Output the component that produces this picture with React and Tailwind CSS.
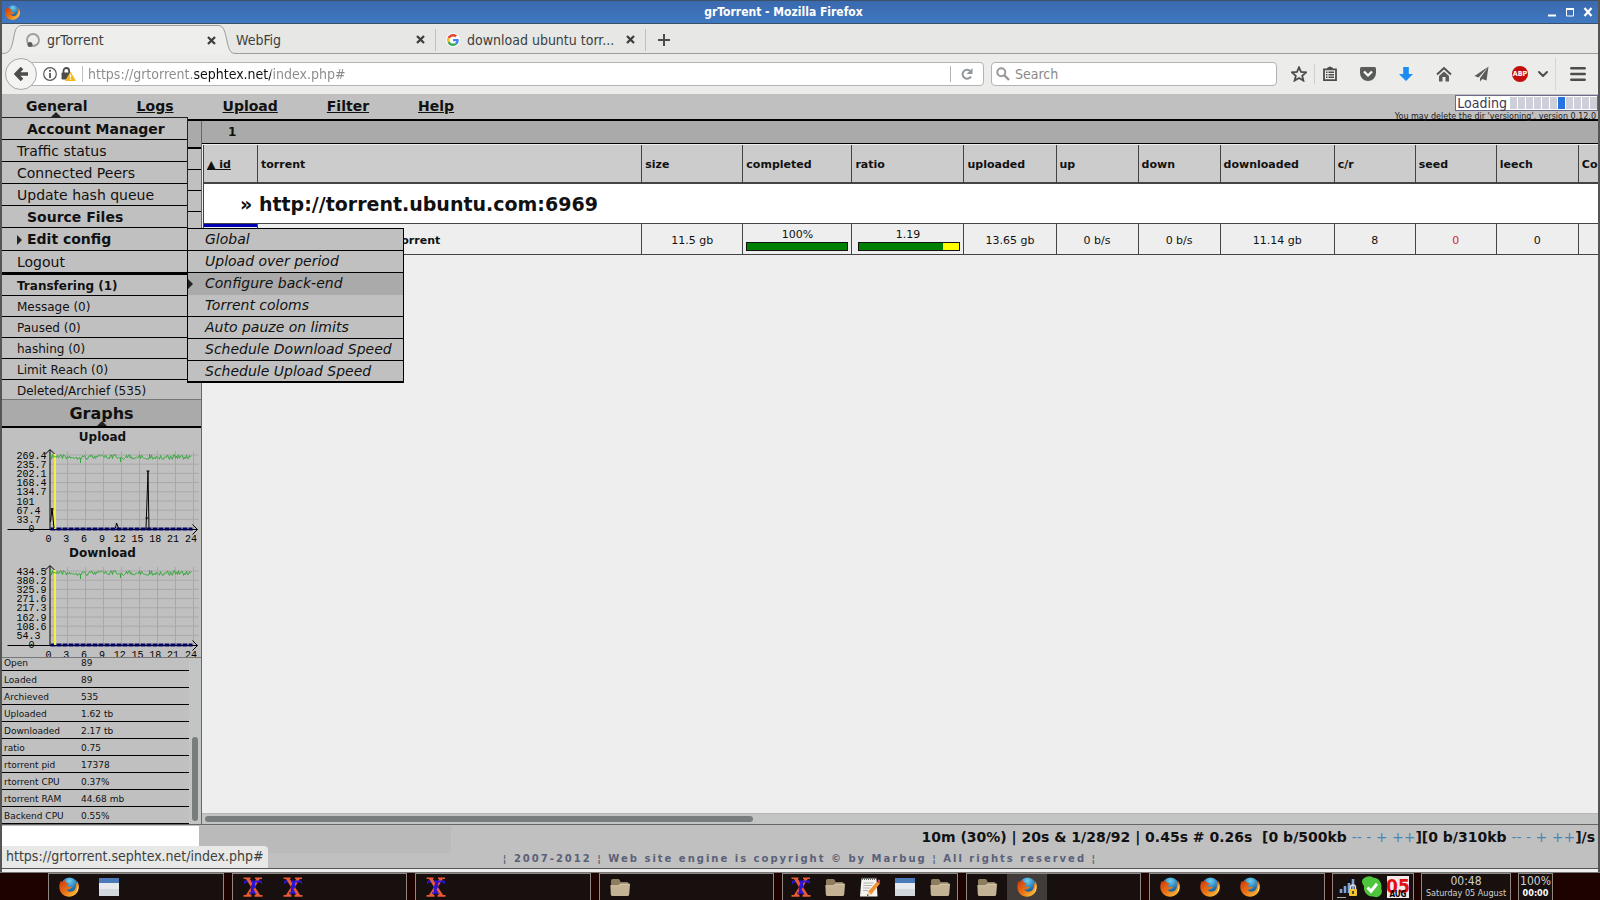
import React from 'react';
import { Menu, ChevronDown } from 'lucide-react';

const menuLinks = ['Logs', 'Upload', 'Filter', 'Help'];

const generalMenu = [
    { label: 'Account Manager', bold: true },
    { label: 'Traffic status' },
    { label: 'Connected Peers' },
    { label: 'Update hash queue' },
    { label: 'Source Files', bold: true },
    { label: 'Edit config', bold: true, open: true },
    { label: 'Logout' },
];

const configMenu = [
    { label: 'Global' },
    { label: 'Upload over period' },
    { label: 'Configure back-end', active: true },
    { label: 'Torrent coloms' },
    { label: 'Auto pauze on limits' },
    { label: 'Schedule Download Speed' },
    { label: 'Schedule Upload Speed' },
];

const statusFilters = ['Message (0)', 'Paused (0)', 'hashing (0)', 'Limit Reach (0)'];

const stats = [
    ['Open', '89'],
    ['Loaded', '89'],
    ['Archieved', '535'],
    ['Uploaded', '1.62 tb'],
    ['Downloaded', '2.17 tb'],
    ['ratio', '0.75'],
    ['rtorrent pid', '17378'],
    ['rtorrent CPU', '0.37%'],
    ['rtorrent RAM', '44.68 mb'],
    ['Backend CPU', '0.55%'],
];

const columns = [
    { name: 'size', width: 'w-[101px]' },
    { name: 'completed', width: 'w-[109px]' },
    { name: 'ratio', width: 'w-[112px]' },
    { name: 'uploaded', width: 'w-[92px]' },
    { name: 'up', width: 'w-[82px]' },
    { name: 'down', width: 'w-[82px]' },
    { name: 'downloaded', width: 'w-[114px]' },
    { name: 'c/r', width: 'w-[81px]' },
    { name: 'seed', width: 'w-[81px]' },
    { name: 'leech', width: 'w-[82px]' },
    { name: 'Co', width: 'w-[120px]' },
];

const desktops = [
    ['firefox', 'window'],
    ['xorg', 'xorg'],
    ['xorg'],
    ['folder'],
    ['xorg', 'folder', 'notes', 'window', 'folder'],
    ['folder', 'firefox-active'],
    ['firefox', 'firefox', 'firefox'],
];

/* ---------- icons ---------- */

function FirefoxIcon({ className }) {
    return (
        <svg viewBox="0 0 20 20" className={className} aria-hidden="true">
            <defs>
                <linearGradient id="fox" x1="0" y1="0" x2="1" y2="1">
                    <stop offset="0" stopColor="#c9340c" />
                    <stop offset="0.55" stopColor="#ee7a17" />
                    <stop offset="1" stopColor="#fbd64a" />
                </linearGradient>
                <radialGradient id="globe" cx="0.5" cy="0.2" r="0.9">
                    <stop offset="0" stopColor="#6fd0f2" />
                    <stop offset="0.5" stopColor="#2379b8" />
                    <stop offset="1" stopColor="#123a6b" />
                </radialGradient>
            </defs>
            <circle cx="10.5" cy="9" r="8.6" fill="url(#globe)" />
            <path d="M1.6 4.2C.2 7-.2 10.600 1 13.500c1.500 3.900 5 6.200 9 6.200 5.400 0 9.800-4.100 9.800-9.700 0-2.800-.7-5-2.300-6.600.6 1.700.8 3.200.5 4.400-.3-1.200-.8-2-1.600-2.700 1 3.200.6 6.200-1.200 8.100-1.700 1.700-4.700 1.900-6.600.6-.8-.5-1.200-1.200-1.300-1.900 1.300.8 2.600.6 3.800-.2.8-.6 1.500-.7 1.900-.7-.3-.9-1.300-1.400-2.600-1.200-1.500.2-2.200-.1-2.900-.9.100-.9 1.700-1.200 2.500-2.300-.7-.6-2.500-.5-3.600-1.600-.5-.5-.7-1.200-.6-2C4.600 3.500 3.900 4 3.500 4.700 2.700 4.500 2 4.400 1.600 4.200z" fill="url(#fox)" />
            <path d="M19 6.500c.9 3.500.3 7.200-2.300 9.700 1.600-3 1.900-6.300 2.300-9.700z" fill="#ffe873" />
        </svg>
    );
}

function WindowIcon({ className }) {
    return (
        <svg viewBox="0 0 20 20" className={className} aria-hidden="true">
            <rect x="0" y="1" width="20" height="18" fill="#e6eaee" />
            <rect x="0" y="1" width="20" height="5" fill="#4a7ab8" />
            <rect x="0" y="12" width="20" height="7" fill="#d3d8dd" />
        </svg>
    );
}

function XorgIcon({ className }) {
    return (
        <svg viewBox="0 0 20 20" className={className} aria-hidden="true">
            <path d="M0.500 0.500h7v1.600H6.700L10 7.800l3.300-5.700H12V.5h7v1.600h-2.300L12 10l5 8h2.500v1.700h-8V18h1.300L10 13.200 7.200 18h1.300v1.700h-8V18H3l5-8-4.700-7.900H.5z" fill="#ea5a35" />
            <path d="M1.500 3.500h17l.8 3.500h-1l-1-1.600h-5.100v9.800h1.800v1.600H6v-1.600h1.800V5.400H2.700L1.700 7h-1z" fill="#2a14d8" />
            <path d="M3.200 2.100h3.500l2.600 4.500-1.500 2.900zM11.500 10.500l3.500 6h-2l-2.500-4z" fill="#ea5a35" />
        </svg>
    );
}

function FolderIcon({ className }) {
    return (
        <svg viewBox="0 0 20 20" className={className} aria-hidden="true">
            <path d="M1 3.500Q1 2 2.500 2h6Q9.500 2 10 3.500l.5 1.500H17q1.500 0 1.500 1.500V17H1z" fill="#8d7c60" />
            <path d="M.4 8.500h8L10 6.800h9Q20 6.800 20 8l-.8 9.500Q19 19 17.500 19H2.500Q1 19 .8 17.500z" fill="#c3b294" />
            <path d="M.4 8.900h8.300l1.500-1.700h9.600" stroke="#ddd0b6" strokeWidth="0.800" fill="none" />
        </svg>
    );
}

function NotesIcon({ className }) {
    return (
        <svg viewBox="0 0 20 20" className={className} aria-hidden="true">
            <path d="M1.500 1.500h15L17.500 19.500H0z" fill="#f4f4f0" />
            <path d="M2 1.800h14.500" stroke="#666" strokeWidth="2.400" strokeDasharray="1 1" />
            <path d="M3.500 6h10M3.300 8.500h9M3 11h7M3 13.500h5" stroke="#a0a0a0" strokeWidth="0.800" />
            <path d="M17 4.500l3 2-8.500 10.800-4.300 1.400 1-4.200z" fill="#f0913a" />
            <path d="M17.400 4l1-1.200q.8-.6 1.600.2.600.8 0 1.600L20 6.500z" fill="#d2465c" />
            <path d="M8.200 14.500l3.300 2.800-4.300 1.400z" fill="#f2dab0" />
            <path d="M7.400 17.200l1.400 1-1.800.8z" fill="#222" />
        </svg>
    );
}

function GoogleIcon({ className }) {
    return (
        <svg viewBox="0 0 48 48" className={className} aria-hidden="true">
            <path fill="#EA4335" d="M24 9.500c3.540 0 6.710 1.220 9.210 3.600l6.850-6.850C35.900 2.380 30.470 0 24 0 14.620 0 6.510 5.380 2.560 13.220l7.980 6.190C12.430 13.720 17.740 9.500 24 9.500z" />
            <path fill="#4285F4" d="M46.980 24.550c0-1.570-.15-3.090-.38-4.550H24v9.020h12.940c-.58 2.960-2.260 5.480-4.780 7.180l7.730 6c4.510-4.180 7.090-10.360 7.090-17.650z" />
            <path fill="#FBBC05" d="M10.530 28.590A14.500 14.500 0 0 1 9.770 24c0-1.600.27-3.140.76-4.590l-7.980-6.190A23.900 23.900 0 0 0 0 24c0 3.880.92 7.540 2.560 10.780z" />
            <path fill="#34A853" d="M24 48c6.480 0 11.930-2.130 15.890-5.810l-7.730-6c-2.150 1.450-4.920 2.300-8.160 2.300-6.260 0-11.570-4.220-13.470-9.910l-7.980 6.190C6.510 42.620 14.620 48 24 48z" />
        </svg>
    );
}

function CloseIcon({ className }) {
    return (
        <svg viewBox="0 0 9 9" className={className} aria-hidden="true">
            <path d="M1 1l7 7M8 1l-7 7" stroke="currentColor" strokeWidth="2.300" />
        </svg>
    );
}

function DesktopIcon({ name }) {
    if (name === 'window') return <WindowIcon className="size-5" />;
    if (name === 'xorg') return <XorgIcon className="size-5" />;
    if (name === 'folder') return <FolderIcon className="size-5" />;
    if (name === 'notes') return <NotesIcon className="size-5" />;
    return <FirefoxIcon className="size-5" />;
}

/* ---------- browser chrome ---------- */

function TitleBar() {
    return (
        <header className="h-6 shrink-0 flex items-center px-[3px] border-t border-b border-[#3c5068] bg-linear-to-b from-[#3a69ad] to-[#3f78c2] text-white">
            <FirefoxIcon className="size-[15px]" />
            <h1 className="flex-1 text-center text-[12px] leading-4 font-bold font-[family-name:'DejaVu_Sans_Condensed','DejaVu_Sans',sans-serif]">
                grTorrent - Mozilla Firefox
            </h1>
            <div className="flex gap-2 pr-0.5">
                <button aria-label="Minimize" className="size-[10px]">
                    <svg viewBox="0 0 10 10"><path d="M1 8.500h8" stroke="#fff" strokeWidth="2" /></svg>
                </button>
                <button aria-label="Maximize" className="size-[10px]">
                    <svg viewBox="0 0 10 10"><path d="M1.500 1v8h7V1M1 1.500h8" stroke="#fff" strokeWidth="1" fill="none" /><path d="M1 2h8" stroke="#fff" strokeWidth="2" /></svg>
                </button>
                <button aria-label="Close" className="size-[10px]">
                    <svg viewBox="0 0 10 10"><path d="M1.500 1l7 8M8.500 1l-7 8" stroke="#fff" strokeWidth="2.200" /></svg>
                </button>
            </div>
        </header>
    );
}

function TabStrip() {
    return (
        <div className="h-[30px] shrink-0 flex items-stretch bg-[#e7e7e5] text-[#3b3f40] text-[14px] leading-4 font-[family-name:'DejaVu_Sans_Condensed','DejaVu_Sans',sans-serif]">
            <svg viewBox="0 0 20 30" className="w-5 h-[30px] shrink-0" aria-hidden="true">
                <path d="M0 29.500C7 29.500 9 26 11 17 13 8 13 1.500 20 1.500V30H0z" fill="#eeeeec" />
                <path d="M0 29.500C7 29.500 9 26 11 17 13 8 13 1.500 20 1.500" fill="none" stroke="#9b9d9b" />
            </svg>
            <div className="w-[196px] flex items-center gap-[7px] pl-1 pr-[2px] mt-px border-t border-[#9b9d9b] bg-[#eeeeec]">
                <svg viewBox="0 0 14 14" className="size-[14px]" aria-hidden="true">
                    <circle cx="7" cy="7" r="6" fill="none" stroke="#9c9e9c" strokeWidth="1.800" />
                    <circle cx="4" cy="11.500" r="2.500" fill="#5a5c5a" />
                </svg>
                <span className="flex-1">grTorrent</span>
                <button aria-label="Close tab"><CloseIcon className="size-[9px]" /></button>
            </div>
            <svg viewBox="0 0 18 30" className="w-[18px] h-[30px] shrink-0" aria-hidden="true">
                <path d="M0 1.500C6 1.500 7 8 9 17 11 26 12 29.500 18 29.500V30H0z" fill="#eeeeec" />
                <path d="M0 1.500C6 1.500 7 8 9 17 11 26 12 29.500 18 29.500" fill="none" stroke="#9b9d9b" />
            </svg>
            <div className="flex-1 flex items-center pt-0.5 border-b border-[#9b9d9b]">
                <div className="w-[200px] flex items-center pr-[10px] border-r border-[#bfc0be] h-[22px]">
                    <span className="flex-1">WebFig</span>
                    <button aria-label="Close tab"><CloseIcon className="size-[9px]" /></button>
                </div>
                <div className="w-[210px] flex items-center gap-[7px] pr-[10px] pl-[10px] border-r border-[#bfc0be] h-[22px]">
                    <span className="size-[14px] p-px rounded-full bg-white"><GoogleIcon className="size-3" /></span>
                    <span className="flex-1 whitespace-nowrap">download ubuntu torr...</span>
                    <button aria-label="Close tab"><CloseIcon className="size-[9px]" /></button>
                </div>
                <button aria-label="New tab" className="ml-3">
                    <svg viewBox="0 0 12 12" className="size-3"><path d="M6 0v12M0 6h12" stroke="#4b4d4b" strokeWidth="2" /></svg>
                </button>
            </div>
        </div>
    );
}

function NavToolbar() {
    return (
        <div className="h-10 shrink-0 flex items-center pl-[3px] pr-[10px] bg-[#ececea] text-[14px] leading-5 font-[family-name:'DejaVu_Sans_Condensed','DejaVu_Sans',sans-serif]">
            <button aria-label="Back" className="relative z-10 size-8 shrink-0 rounded-full border border-[#a5a7a5] bg-[#f4f4f3] flex items-center justify-center">
                <svg viewBox="0 0 14 14" className="size-[14px]"><path d="M8 1L2.200 7 8 13M3 7h11" stroke="#4c4e4c" strokeWidth="3.600" fill="none" /></svg>
            </button>
            <div className="-ml-2 flex-1 h-6 flex items-center pl-[13px] border border-[#b2b4b2] rounded-r-sm bg-white">
                <svg viewBox="0 0 14 14" className="size-[14px] shrink-0" aria-hidden="true">
                    <circle cx="7" cy="7" r="6.300" fill="none" stroke="#555" strokeWidth="1.200" />
                    <path d="M7 6v5" stroke="#555" strokeWidth="1.800" />
                    <circle cx="7" cy="3.800" r="1.100" fill="#555" />
                </svg>
                <svg viewBox="0 0 15 14" className="ml-1 w-[15px] h-[14px] shrink-0" aria-hidden="true">
                    <path d="M2.500 6V3.800a2.800 2.800 0 0 1 5.600 0V6" fill="none" stroke="#4c4c4c" strokeWidth="1.800" />
                    <rect x="0.500" y="5.500" width="9.500" height="7" rx="1" fill="#4c4c4c" />
                    <path d="M9.500 4.500L15 14H4z" fill="#f6b91d" />
                    <path d="M9.500 7.500v3M9.500 11.500v1.300" stroke="#fff" strokeWidth="1.200" />
                </svg>
                <span className="ml-1.5 h-4 w-px bg-[#c2c2c2]" />
                <input
                    aria-label="Address"
                    defaultValue="https://grtorrent.sephtex.net/index.php#"
                    className="ml-[5px] flex-1 min-w-0 outline-none text-transparent bg-clip-text bg-[linear-gradient(to_right,#8a8a8a_106px,#111_106px,#111_183px,#8a8a8a_183px)]"
                />
                <span className="h-4 w-px bg-[#b2b4b2]" />
                <button aria-label="Reload" className="w-8 flex justify-center">
                    <svg viewBox="0 0 12 12" className="size-3"><path d="M9.300 3A4.500 4.500 0 1 0 10 8.500" fill="none" stroke="#8f979f" strokeWidth="2" /><path d="M11.500 0v6h-6z" fill="#8f979f" /></svg>
                </button>
            </div>
            <label className="ml-[7px] w-[286px] h-6 flex items-center gap-[5px] pl-1 border border-[#b2b4b2] rounded-sm bg-white">
                <svg viewBox="0 0 14 14" className="size-[14px]" aria-hidden="true"><circle cx="5.300" cy="5.300" r="4" fill="none" stroke="#999" strokeWidth="2" /><path d="M8.200 8.200L13 13" stroke="#999" strokeWidth="2.400" /></svg>
                <input aria-label="Search" placeholder="Search" className="flex-1 min-w-0 outline-none placeholder:text-[#8a8a8a]" />
            </label>
            <button aria-label="Bookmark" className="ml-[14px] w-4 text-[#4c4e4c]">
                <svg viewBox="0 0 16 16" className="size-4"><path d="M8 1.300l2 4.600 5 .5-3.800 3.300 1.200 4.900L8 12l-4.400 2.600 1.200-4.900L1 6.400l5-.5z" fill="none" stroke="currentColor" strokeWidth="1.800" /></svg>
            </button>
            <span className="ml-[7px] h-5 w-px bg-[#cfcfcd]" />
            <div className="ml-[7px] flex items-center gap-[22px]">
                <button aria-label="Bookmarks list">
                    <svg viewBox="0 0 16 16" className="size-4"><path d="M2 3.400h12v10.800H2z" fill="none" stroke="#4c4e4c" strokeWidth="1.800" /><path d="M4.500 3.500Q5 1 8 .5q3 .5 3.500 3z" fill="#4c4e4c" /><path d="M4 6.300h1.500M6.500 6.300h5.500M4 8.800h1.500M6.500 8.800h5.500M4 11.300h1.500M6.500 11.300h5.500" stroke="#4c4e4c" strokeWidth="1.400" /></svg>
                </button>
                <button aria-label="Pocket">
                    <svg viewBox="0 0 16 16" className="size-4"><path d="M0 2.500Q0 1 1.500 1h13Q16 1 16 2.500V7A8 8 0 0 1 0 7z" fill="#5a5c5a" /><path d="M4 5.500l4 4 4-4" fill="none" stroke="#fff" strokeWidth="2.200" /></svg>
                </button>
                <button aria-label="Downloads">
                    <svg viewBox="0 0 16 16" className="size-4"><path d="M5.200 1h5.600v7H15l-7 7-7-7h4.200z" fill="#1b8cf2" /></svg>
                </button>
                <button aria-label="Home">
                    <svg viewBox="0 0 16 16" className="size-4"><path d="M1 8.500l7-6.500 7 6.500" fill="none" stroke="#4c4e4c" strokeWidth="1.900" /><path d="M8 5.500l5 4.500v5.500H9.500V11h-3v4.500H3V10z" fill="#5a5c5a" /></svg>
                </button>
                <button aria-label="Share">
                    <svg viewBox="0 0 16 16" className="size-4"><path d="M14.500.5L.5 10l4 1.500z" fill="#5a5c5a" /><path d="M14.500.5L6 12.200v3.300l2.300-2.400 4.200 1.400z" fill="#5a5c5a" /></svg>
                </button>
                <button aria-label="Adblock Plus" className="size-4 rounded-full bg-[#c40d0d] text-white text-[7px] leading-4 font-bold flex justify-center font-[family-name:'DejaVu_Sans_Condensed','DejaVu_Sans',sans-serif]">ABP</button>
            </div>
            <button aria-label="Adblock options" className="ml-[7px]"><ChevronDown size={16} strokeWidth={3} color="#4c4e4c" /></button>
            <span className="ml-1 h-8 w-px bg-[#d4d4d2]" />
            <button aria-label="Open menu" className="ml-3">
                <Menu size={20} strokeWidth={3} color="#4c4e4c" />
            </button>
        </div>
    );
}

/* ---------- page ---------- */

function ConfigMenu() {
    return (
        <ul className="absolute left-[185px] top-[110px] w-[217px] border border-b-2 border-black bg-[#c0c0c0] italic">
            {configMenu.map((item) => (
                <li
                    key={item.label}
                    className={item.active
                        ? 'relative h-[22px] bg-[#aaaaaa]'
                        : 'h-[22px] border-b border-black last:border-b-0 last:h-5'}
                >
                    {item.active && (
                        <svg viewBox="0 0 5 10" className="absolute left-0 top-1.5 w-[5px] h-[10px]" aria-hidden="true"><path d="M0 0l5 5-5 5z" fill="#222" /></svg>
                    )}
                    <a href="#" className="block pl-[17px] leading-[21px] whitespace-nowrap">{item.label}</a>
                </li>
            ))}
        </ul>
    );
}

function GeneralMenu() {
    return (
        <div className="absolute left-0 top-[23px] z-20 w-[186px] border-t border-r border-[#222] bg-[#c0c0c0] text-[14px]">
            <ul>
                {generalMenu.map((item) => (
                    <li
                        key={item.label}
                        className={item.open
                            ? 'h-[23px] border-b border-black'
                            : 'h-[22px] border-b border-black last:border-b-[3px] last:h-6'}
                    >
                        <a
                            href="#"
                            className={item.bold
                                ? 'flex items-center pl-[15px] leading-[23px] font-bold'
                                : 'flex items-center pl-[15px] leading-[23px]'}
                        >
                            {item.bold && (
                                <span className="w-[10px]">
                                    {item.open && <svg viewBox="0 0 5 10" className="w-[5px] h-[10px]" aria-hidden="true"><path d="M0 0l5 5-5 5z" fill="#222" /></svg>}
                                </span>
                            )}
                            {item.label}
                        </a>
                    </li>
                ))}
            </ul>
            <ConfigMenu />
        </div>
    );
}

function LoadingBox() {
    return (
        <div className="flex flex-col items-end pt-px">
            <div className="h-4 flex items-center gap-[3px] pl-px border border-[#6a6a8c] bg-white">
                <span className="text-[14px] leading-[14px] text-[#3a3a55] font-[family-name:'DejaVu_Sans_Condensed','DejaVu_Sans',sans-serif]">Loading</span>
                <span className="flex gap-px">
                    {Array.from({ length: 11 }, (_, i) => (
                        <span key={i} className={i === 6 ? 'w-[7px] h-3 bg-[#2672e0]' : 'w-[7px] h-3 bg-[#cfcfda]'} />
                    ))}
                </span>
            </div>
            <p className="h-2 text-[8px] leading-[11px] text-[#222] pr-0.5">You may delete the dir 'versioning', version 0.12.0</p>
        </div>
    );
}

function MenuBar() {
    return (
        <nav className="relative h-[27px] shrink-0 flex justify-between bg-[#c0c0c0] border-b-2 border-black">
            <div className="flex items-center gap-[49px] pl-6 pb-0.5 text-[14px] leading-5 font-bold">
                <a href="#">General</a>
                {menuLinks.map((link) => (
                    <a key={link} href="#" className="underline">{link}</a>
                ))}
            </div>
            <svg viewBox="0 0 10 5" className="absolute left-[49px] top-[18px] w-[10px] h-[5px]" aria-hidden="true"><path d="M5 0l5 5H0z" fill="#222" /></svg>
            <LoadingBox />
            <GeneralMenu />
        </nav>
    );
}

const limitLine = Array.from({ length: 142 }, (_, i) => {
    const noise = Math.abs(Math.sin(i * 12.9898) * 43758.5453) % 1;
    return `${48 + i},${(10.5 + noise * 5).toFixed(1)}`;
}).join(' ');

function Graph({ title, labels, children }) {
    return (
        <figure className="h-[116px]">
            <figcaption className="h-4 pl-0.5 text-center text-[12px] leading-[18px] font-bold">{title}</figcaption>
            <svg viewBox="0 0 198 100" className="w-full h-[100px]" fontFamily="'Liberation Mono', monospace" fontSize="10">
                {Array.from({ length: 8 }, (_, i) => (
                    <path key={i} d={`M${65 + i * 18} 7v78M47 ${11 + i * 9.2}h149`} stroke="#a8a8a8" strokeWidth="1" />
                ))}
                <path d="M5 85.500h190M190 80.500l5 5-5 5M47.500 86V6M42.500 10.500l5-5 5 5" stroke="#000" fill="none" />
                <path d="M48 85h142" stroke="#000060" strokeWidth="3" strokeDasharray="5 1" />
                <path d="M52.500 10v75" stroke="#f5f03c" strokeWidth="2" />
                <polyline points={limitLine} fill="none" stroke="#34a83c" strokeWidth="1" />
                <path d="M78 14v5M118 14v4M147 10v4" stroke="#34a83c" />
                {labels.map((label, i) => (
                    <text key={label} x="14" y={14.5 + i * 9.2}>{label}</text>
                ))}
                <text x="26" y="88">0</text>
                {Array.from({ length: 9 }, (_, i) => (
                    <text key={i} x={46 + i * 17.8} y="97.500" textAnchor="middle">{i * 3}</text>
                ))}
                {children}
            </svg>
        </figure>
    );
}

function Sidebar() {
    return (
        <aside className="w-[200px] shrink-0 flex flex-col border-r border-[#666] bg-[#c0c0c0]">
            <div className="h-7 shrink-0 border-b-2 border-black bg-[#aaaaaa]" />
            {Array.from({ length: 6 }, (_, i) => (
                <div key={i} className="h-[21px] shrink-0 border-b border-black" />
            ))}
            <ul className="text-[12px] leading-[22px]">
                <li className="h-[21px] pl-[15px] border-b border-black font-bold"><a href="#">Transfering (1)</a></li>
                {statusFilters.map((filter) => (
                    <li key={filter} className="h-[21px] pl-[15px] border-b border-black"><a href="#">{filter}</a></li>
                ))}
                <li className="h-5 pl-[15px] border-b border-[#777]"><a href="#">Deleted/Archief (535)</a></li>
            </ul>
            <h2 className="relative h-7 shrink-0 border-b-2 border-black bg-[#aaaaaa] text-center text-[16px] leading-7 font-bold">
                Graphs
                <svg viewBox="0 0 10 5" className="absolute left-[95px] bottom-0 w-[10px] h-[5px]" aria-hidden="true"><path d="M5 0l5 5H0z" fill="#222" /></svg>
            </h2>
            <div className="h-[230px] shrink-0 overflow-hidden border-b border-[#777]">
                <Graph title="Upload" labels={['269.4', '235.7', '202.1', '168.4', '134.7', '101', '67.4', '33.7']}>
                    <path d="M48 78l1.500-14 2 20M113 84l1-5 2 5M143.500 85l2-58 1 58M144 27h3M143 74h3M48 65h3" stroke="#000" fill="none" />
                </Graph>
                <Graph title="Download" labels={['434.5', '380.2', '325.9', '271.6', '217.3', '162.9', '108.6', '54.3']} />
            </div>
            <div className="flex-1 min-h-0 flex border-b border-[#666] text-[9px] leading-[14px]">
                <div className="w-[187px] flex flex-col justify-end overflow-hidden">
                    <table className="w-full border-separate border-spacing-0">
                        <tbody>
                            {stats.map(([name, value]) => (
                                <tr key={name}>
                                    <th scope="row" className="w-[79px] h-[17px] pt-0.5 pb-0 pl-0.5 text-left font-normal border-b border-black">{name}</th>
                                    <td className="h-[17px] p-0 pt-0.5 border-b border-black">{value}</td>
                                </tr>
                            ))}
                        </tbody>
                    </table>
                </div>
                <div className="flex-1 flex flex-col justify-end items-center pb-[3px] bg-[#c3c5c4]">
                    <div className="w-1.5 h-[84px] rounded-full bg-[#7a7d7d]" />
                </div>
            </div>
        </aside>
    );
}

function Bar({ value }) {
    return (
        <div className="ml-auto mr-[3px] w-[102px] h-[9px] border border-[#111] bg-[#ffff00]">
            <div className="h-full bg-[#008000]" style={{ width: `${value}%` }} />
        </div>
    );
}

function TorrentTable() {
    const cell = 'p-0 pt-[3px] text-center border-l border-b border-[#444]';
    const barCell = 'p-0 pt-px text-center border-l border-b border-[#444]';
    return (
        <table className="ml-px w-[1495px] table-fixed border-separate border-spacing-0 text-[11px] leading-4">
            <thead>
                <tr className="h-[39px] bg-[#cccccc] text-left">
                    <th className="w-[54px] p-0 pl-[3px] pt-0.5 border-l border-b-2 border-[#444]"><a href="#" className="underline">▲ id</a></th>
                    <th className="w-[384px] p-0 pl-[3px] pt-0.5 border-l border-b-2 border-[#444]">torrent</th>
                    {columns.map((col) => (
                        <th key={col.name} className={`${col.width} p-0 pl-[3px] pt-0.5 border-l border-b-2 border-[#444]`}>{col.name}</th>
                    ))}
                </tr>
            </thead>
            <tbody>
                <tr className="h-10 bg-white">
                    <td colSpan={13} className="p-0 pt-px pl-9 border-l border-b border-[#444] text-[19px] leading-6 font-bold">» http://torrent.ubuntu.com:6969</td>
                </tr>
                <tr className="h-[31px] bg-[#eeeeee]">
                    <td className="p-0 border-l border-b border-[#444]"><div className="h-[30px] border-t-[3px] border-[#0000b0]" /></td>
                    <td className="p-0 pt-[3px] pl-[138px] border-l border-b border-[#444] font-bold">torrent</td>
                    <td className={cell}>11.5 gb</td>
                    <td className={barCell}><div className="leading-[14px]">100%</div><Bar value={100} /></td>
                    <td className={barCell}><div className="leading-[14px]">1.19</div><Bar value={84} /></td>
                    <td className={cell}>13.65 gb</td>
                    <td className={cell}>0 b/s</td>
                    <td className={cell}>0 b/s</td>
                    <td className={cell}>11.14 gb</td>
                    <td className={cell}>8</td>
                    <td className={`${cell} text-[#d8232a]`}>0</td>
                    <td className={cell}>0</td>
                    <td className={cell} />
                </tr>
            </tbody>
        </table>
    );
}

function SpeedControls() {
    return (
        <span className="font-normal text-[#4a86b5]">
            <a href="#">--</a> <a href="#">-</a> <a href="#">+</a> <a href="#">++</a>
        </span>
    );
}

function Footer() {
    return (
        <footer className="relative h-[43px] shrink-0 bg-[#c0c0c0]">
            <div className="h-7 flex justify-between">
                <div className="flex pt-px">
                    <input aria-label="Message" className="w-[197px] h-5 bg-white outline-none" />
                    <div className="w-[252px] bg-[#bababa]" />
                </div>
                <p className="pr-[3px] text-[14px] leading-[25px] font-bold whitespace-pre">
                    10m (30%) | 20s &amp; 1/28/92 | 0.45s # 0.26s{'  '}[0 b/500kb <SpeedControls />][0 b/310kb <SpeedControls />]/s
                </p>
            </div>
            <p className="text-center text-[10px] leading-3 font-bold tracking-[2px] text-[#5a6078]">
                ¦ 2007-2012 ¦ Web site engine is copyright © by Marbug ¦ All rights reserved ¦
            </p>
            <div className="absolute left-0 bottom-0 h-[22px] px-1 rounded-tr-sm bg-[#e8e8e6] text-[14px] leading-[21px] text-[#3b3f40] font-[family-name:'DejaVu_Sans_Condensed','DejaVu_Sans',sans-serif]">
                https://grtorrent.sephtex.net/index.php#
            </div>
        </footer>
    );
}

function Taskbar() {
    return (
        <div className="h-7 shrink-0 flex gap-[7px] pl-12 pr-[47px] border-t border-[#777] bg-[#1c0300] text-[#d0d0d0]">
            <div className="flex-1 flex gap-2">
                {desktops.map((icons, i) => (
                    <div key={i} className="flex-1 min-w-0 flex border border-b-0 border-[#8f8782] bg-[#17100e]">
                        {icons.map((name, j) => (
                            <button
                                key={j}
                                aria-label={name}
                                className={name === 'firefox-active'
                                    ? 'flex-1 min-w-0 max-w-10 flex items-center justify-center bg-[#413b3a]'
                                    : 'flex-1 min-w-0 max-w-10 flex items-center justify-center'}
                            >
                                <DesktopIcon name={name} />
                            </button>
                        ))}
                    </div>
                ))}
            </div>
            <div className="w-[82px] flex items-center justify-center gap-1 border border-b-0 border-[#8f8782] bg-[#17100e]">
                <svg viewBox="0 0 20 22" className="w-5 h-[22px]" aria-hidden="true">
                    <path d="M0 21.500h9" stroke="#aaa" strokeWidth="1" />
                    <path d="M4 17v-4M8 17v-7M12 17V7M16 14V3" stroke="#7fa6dc" strokeWidth="2.600" />
                    <path d="M13.500 13v-1.500a2.500 2.500 0 0 1 5 0V13" stroke="#ddd" strokeWidth="1.400" fill="none" />
                    <rect x="12" y="13" width="8" height="7" rx="1" fill="#f0c52e" />
                    <path d="M16 15v3" stroke="#222" strokeWidth="1.500" />
                </svg>
                <svg viewBox="0 0 22 22" className="size-[22px]" aria-hidden="true">
                    <path d="M5 1Q9-.5 12 1.500q6 0 8 6 .8 2.500.2 5 1.500 3-.2 6-3 4-7.500 2-5.500.5-8.500-4.500-1.500-3-1-6Q0 7 1.500 3.500 3 1.500 5 1z" fill="#4fc43d" />
                    <path d="M6.500 11.500l3.500 3.700 6-7.500" fill="none" stroke="#fff" strokeWidth="3" />
                </svg>
                <span className="relative w-[22px] h-[22px] bg-[#f4e9e6] text-[#e01010] text-[19px] leading-5 font-bold flex justify-center font-[family-name:'DejaVu_Sans_Condensed','DejaVu_Sans',sans-serif]">
                    05
                    <span className="absolute inset-x-0 bottom-0 text-center text-[8px] leading-[7px] text-black">AUG</span>
                </span>
            </div>
            <div className="w-[90px] border border-b-0 border-[#8f8782] bg-[#17100e] text-center whitespace-nowrap font-[family-name:'DejaVu_Sans_Condensed','DejaVu_Sans',sans-serif]">
                <p className="text-[12px] leading-[15px]">00:48</p>
                <p className="text-[9px] leading-[9px]">Saturday 05 August</p>
            </div>
            <div className="w-[35px] border border-b-0 border-[#8f8782] bg-[#17100e] text-center whitespace-nowrap font-[family-name:'DejaVu_Sans_Condensed','DejaVu_Sans',sans-serif]">
                <p className="text-[12px] leading-[15px]">100%</p>
                <p className="text-[9px] leading-[9px] font-bold text-white">00:00</p>
            </div>
        </div>
    );
}

export default function App() {
    return (
        <div className="h-screen flex flex-col overflow-hidden bg-[#1c0300] text-[#111] font-[family-name:'DejaVu_Sans',Verdana,sans-serif]">
            <div className="flex-1 min-h-0 flex flex-col border-l-2 border-r-2 border-[#555]">
                <TitleBar />
                <TabStrip />
                <NavToolbar />
                <MenuBar />
                <main className="flex-1 min-h-0 flex">
                    <Sidebar />
                    <section className="flex-1 min-w-0 flex flex-col bg-[#eeeeee]">
                        <div className="h-[23px] shrink-0 pl-[26px] border-b border-black bg-[#aaaaaa] text-[12px] leading-[22px] font-bold">
                            <a href="#">1</a>
                        </div>
                        <div className="flex-1 min-h-0 pt-px overflow-hidden">
                            <TorrentTable />
                        </div>
                        <div className="h-3 shrink-0 flex items-center px-[3px] border-t border-b border-t-[#b5b5b5] border-b-[#666] bg-[#c3c5c4]">
                            <div className="w-[39.4%] h-1.5 rounded-full bg-[#7a7d7d]" />
                        </div>
                    </section>
                </main>
                <Footer />
                <div className="h-1 shrink-0 border-t border-[#555] bg-[#efefef]" />
            </div>
            <Taskbar />
        </div>
    );
}
